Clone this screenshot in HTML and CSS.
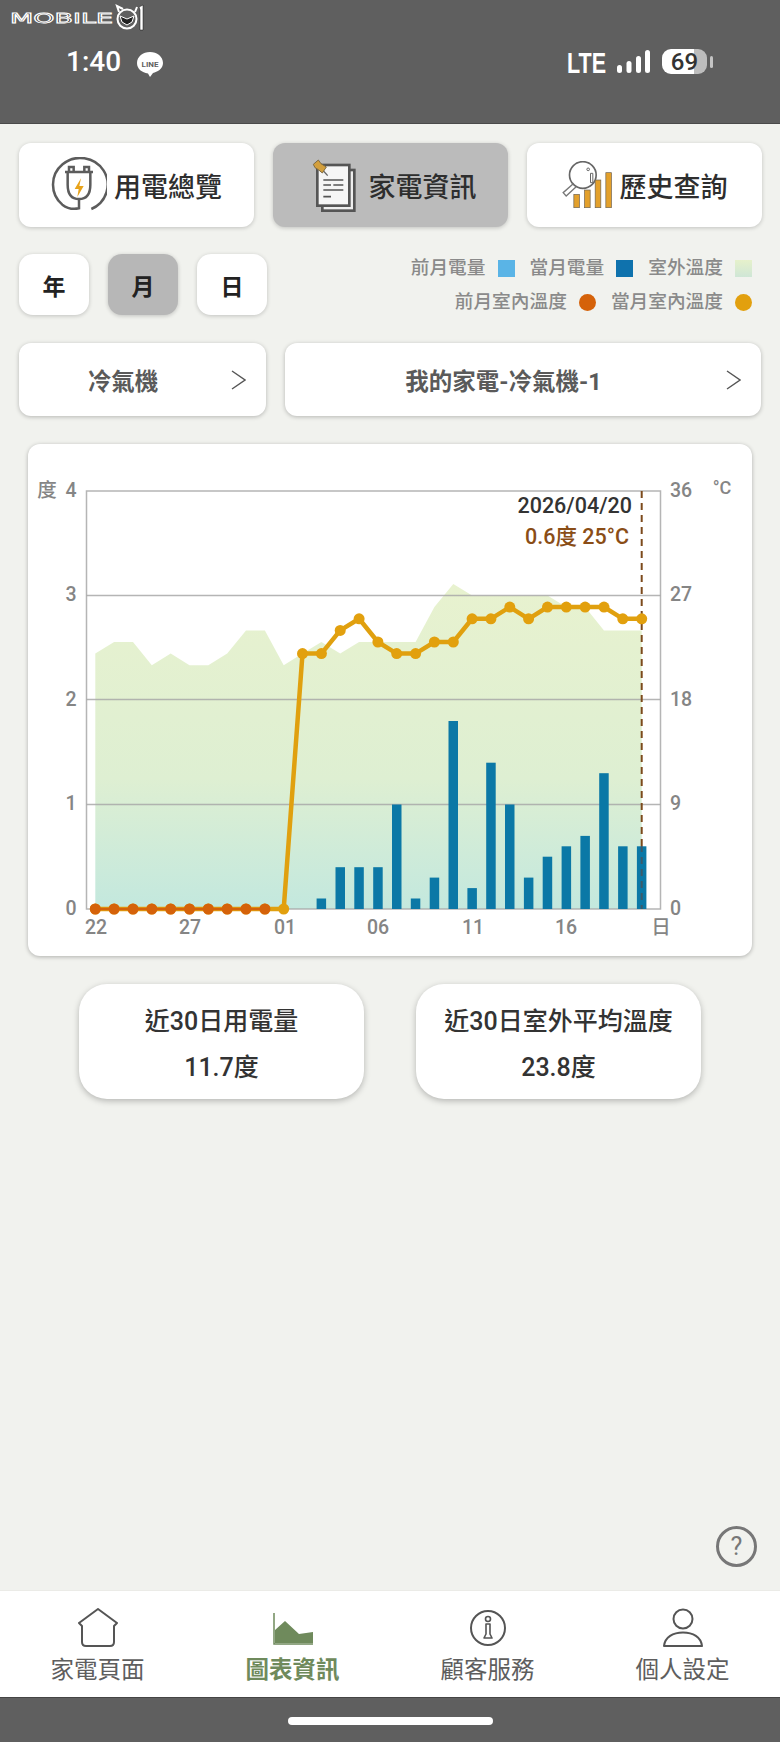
FILE: index.html
```html
<!DOCTYPE html>
<html lang="zh-Hant">
<head>
<meta charset="utf-8">
<title>圖表資訊</title>
<link rel="stylesheet" href="styles.css">
</head>
<body>
<div class="page">

  <!-- watermark over the status bar -->
  <svg class="logo" viewBox="0 0 136 27" width="136" height="27">
    <text class="logo-text" x="1" y="19" textLength="103" lengthAdjust="spacingAndGlyphs">MOBILE</text>
    <circle class="logo-ring" cx="118" cy="15" r="9.500"/>
    <path class="logo-ring" d="M110 8 L108 2 L114 5 M126 8 L128 3"/>
    <path class="logo-face" d="M111 12 L118 15 L125 12 L123 18 L118 21 L113 18 Z"/>
    <path class="logo-one" d="M130 3 L134 1 V26 H131 V6 Z"/>
  </svg>

  <div class="statusbar">
    <span class="time">1:40</span>
    <svg class="line-icon" viewBox="0 0 28 28" width="28" height="28">
      <path class="white" d="M14 2 C21 2 27 6.500 27 13 C27 19 21 22 17 23 L14 27 L12 23.500 C6 22.500 1 19 1 13 C1 6.500 7 2 14 2 Z"/>
      <text class="line-text" x="14" y="16.500" text-anchor="middle">LINE</text>
    </svg>
    <span class="spacer"></span>
    <svg class="lte" viewBox="0 0 40 26" width="40" height="26">
      <text class="lte-text" x="0" y="24" textLength="39" lengthAdjust="spacingAndGlyphs">LTE</text>
    </svg>
    <svg class="signal" viewBox="0 0 33 26" width="33" height="26">
      <rect class="white" x="0" y="16" width="5" height="8" rx="2.500"/>
      <rect class="white" x="9.500" y="12" width="5" height="12" rx="2.500"/>
      <rect class="white" x="19" y="7" width="5" height="17" rx="2.500"/>
      <rect class="white" x="28" y="1" width="5" height="23" rx="2.500"/>
    </svg>
    <div class="battery"><span>69</span></div>
    <span class="battery-nub"></span>
  </div>

  <main class="main">

    <div class="tabs">
      <div class="tab">
        <svg class="tab-icon plug" viewBox="66 52 168 168" width="56" height="56">
          <path class="ic" d="M187 208 A82 80 0 1 0 100 195 Q122 212 150 206 V180"/>
          <path class="ic" d="M120 95 V82 H134 V95 M166 95 V82 H180 V95 M108 97 H192 M116 97 V135 Q116 178 150 178 Q184 178 184 135 V97"/>
          <path class="bolt" d="M156 116 L137 148 H149 L145 172 L164 139 H151 Z"/>
        </svg>
        <span>用電總覽</span>
      </div>
      <div class="tab on">
        <svg class="tab-icon doc" viewBox="0 0 180 180" width="60" height="60">
          <rect class="doc-back" x="52" y="45" width="96" height="122"/>
          <rect class="doc-front" x="37" y="30" width="96" height="122"/>
          <path class="doc-lines" d="M55 75 H115 M55 90 H78 M85 90 H115 M55 105 H115 M55 125 H78"/>
          <path class="pin-leg" d="M50 42 L68 62"/>
          <path class="pin" d="M25 28 L40 15 L48 26 L64 36 L52 54 L40 44 L30 38 Z"/>
        </svg>
        <span>家電資訊</span>
      </div>
      <div class="tab">
        <svg class="tab-icon mag" viewBox="98 63 152 144" width="51" height="48">
          <circle class="lens" cx="160" cy="105" r="40"/>
          <path class="lens-h" d="M133 130 L101 158 L110 168 L140 140"/>
          <rect class="bar-ic" x="133" y="163" width="17" height="40"/>
          <rect class="bar-ic" x="165" y="150" width="17" height="53"/>
          <rect class="bar-ic" x="197" y="120" width="17" height="83"/>
          <rect class="bar-ic" x="229" y="98" width="17" height="105"/>
          <circle class="lens-i" cx="176" cy="88" r="4"/>
          <path class="lens-i" d="M183 100 V128 L190 128 V100 Z"/>
        </svg>
        <span>歷史查詢</span>
      </div>
    </div>

    <div class="filter-row">
      <div class="periods">
        <div class="period">年</div>
        <div class="period on">月</div>
        <div class="period">日</div>
      </div>
      <div class="legend">
        <div class="legend-row">
          <span>前月電量</span><i class="sw sw-prev"></i>
          <span>當月電量</span><i class="sw sw-cur"></i>
          <span>室外溫度</span><i class="sw sw-out"></i>
        </div>
        <div class="legend-row">
          <span>前月室內溫度</span><i class="sw dot dot-prev"></i>
          <span>當月室內溫度</span><i class="sw dot dot-cur"></i>
        </div>
      </div>
    </div>

    <div class="selects">
      <div class="select">
        <span class="select-text">冷氣機</span>
        <svg class="chev" viewBox="0 0 15 20" width="15" height="20"><path d="M1 1 L14 10 L1 19"/></svg>
      </div>
      <div class="select">
        <span class="select-text">我的家電-冷氣機-1</span>
        <svg class="chev" viewBox="0 0 15 20" width="15" height="20"><path d="M1 1 L14 10 L1 19"/></svg>
      </div>
    </div>

    <div class="chart-card">
      <!-- viewBox is in page pixels so the numbers read straight off the screenshot -->
      <svg class="chart" viewBox="28 444 724 512" width="724" height="512">
        <defs>
          <linearGradient id="areaFill" x1="0" y1="0" x2="0" y2="1">
            <stop offset="0" stop-color="#e8f2cf"/>
            <stop offset="0.6" stop-color="#deefd2"/>
            <stop offset="1" stop-color="#c3e8de"/>
          </linearGradient>
          <marker id="dotY" markerUnits="userSpaceOnUse" markerWidth="12" markerHeight="12" refX="6" refY="6">
            <circle cx="6" cy="6" r="5.500" fill="#e2a00e"/>
          </marker>
          <marker id="dotO" markerUnits="userSpaceOnUse" markerWidth="12" markerHeight="12" refX="6" refY="6">
            <circle cx="6" cy="6" r="5.500" fill="#d5620a"/>
          </marker>
        </defs>

        <polygon fill="url(#areaFill)" points="95.300,909 95.300,653.600 114.100,642 133,642 151.800,665.200 170.700,653.600 189.500,665.200 208.300,665.200 227.200,653.600 246,630.400 264.900,630.400 283.700,665.200 302.500,653.600 321.400,642 340.200,653.600 359.100,642 377.900,642 396.700,642 415.600,642 434.400,607.100 453.300,583.900 472.100,595.500 490.900,595.500 509.800,595.500 528.600,595.500 547.500,595.500 566.300,607.100 585.100,607.100 604,630.400 622.800,630.400 641.700,630.400 641.700,909"/>

        <g class="grid">
          <path d="M86.500 491 H660.500 V909 H86.500 Z"/>
          <path d="M86.500 595.500 H660.500 M86.500 699.500 H660.500 M86.500 804.500 H660.500"/>
        </g>

        <path class="hover-line" d="M641.700 491 V909"/>

        <g class="bars">
          <rect x="316.600" y="898.500" width="9.500" height="10.500"/>
          <rect x="335.500" y="867.200" width="9.500" height="41.800"/>
          <rect x="354.300" y="867.200" width="9.500" height="41.800"/>
          <rect x="373.200" y="867.200" width="9.500" height="41.800"/>
          <rect x="392" y="804.500" width="9.500" height="104.500"/>
          <rect x="410.800" y="898.500" width="9.500" height="10.500"/>
          <rect x="429.700" y="877.600" width="9.500" height="31.400"/>
          <rect x="448.500" y="721" width="9.500" height="188"/>
          <rect x="467.400" y="888.100" width="9.500" height="20.900"/>
          <rect x="486.200" y="762.700" width="9.500" height="146.300"/>
          <rect x="505" y="804.500" width="9.500" height="104.500"/>
          <rect x="523.900" y="877.600" width="9.500" height="31.400"/>
          <rect x="542.700" y="856.700" width="9.500" height="52.300"/>
          <rect x="561.600" y="846.300" width="9.500" height="62.700"/>
          <rect x="580.400" y="835.900" width="9.500" height="73.100"/>
          <rect x="599.200" y="773.200" width="9.500" height="135.800"/>
          <rect x="618.100" y="846.300" width="9.500" height="62.700"/>
          <rect x="636.900" y="846.300" width="9.500" height="62.700"/>
        </g>
        <path class="hover-line over" d="M641.700 846 V909"/>

        <polyline class="line-cur" marker-start="url(#dotY)" marker-mid="url(#dotY)" marker-end="url(#dotY)" points="95.300,909 114.100,909 133,909 151.800,909 170.700,909 189.500,909 208.300,909 227.200,909 246,909 264.900,909 283.700,909 302.500,653.600 321.400,653.600 340.200,630.400 359.100,618.800 377.900,642 396.700,653.600 415.600,653.600 434.400,642 453.300,642 472.100,618.800 490.900,618.800 509.800,607.100 528.600,618.800 547.500,607.100 566.300,607.100 585.100,607.100 604,607.100 622.800,618.800 641.700,618.800"/>
        <polyline class="line-prev" marker-start="url(#dotO)" marker-mid="url(#dotO)" marker-end="url(#dotO)" points="95.300,909 114.100,909 133,909 151.800,909 170.700,909 189.500,909 208.300,909 227.200,909 246,909 264.900,909"/>

        <g class="axis">
          <text x="47" y="497" text-anchor="middle">度</text>
          <text x="71" y="497" text-anchor="middle">4</text>
          <text x="71" y="601" text-anchor="middle">3</text>
          <text x="71" y="706" text-anchor="middle">2</text>
          <text x="71" y="810" text-anchor="middle">1</text>
          <text x="71" y="915" text-anchor="middle">0</text>
          <text x="670" y="497">36</text>
          <text x="670" y="601">27</text>
          <text x="670" y="706">18</text>
          <text x="670" y="810">9</text>
          <text x="670" y="915">0</text>
          <text class="unit" x="722" y="494" text-anchor="middle">°C</text>
          <text x="96" y="934" text-anchor="middle">22</text>
          <text x="190" y="934" text-anchor="middle">27</text>
          <text x="285" y="934" text-anchor="middle">01</text>
          <text x="378" y="934" text-anchor="middle">06</text>
          <text x="473" y="934" text-anchor="middle">11</text>
          <text x="566" y="934" text-anchor="middle">16</text>
          <text x="661" y="934" text-anchor="middle">日</text>
        </g>

        <text class="tip-date" x="632" y="513" text-anchor="end">2026/04/20</text>
        <text class="tip-val" x="629" y="544" text-anchor="end">0.6度 25°C</text>
      </svg>
    </div>

    <div class="stats">
      <div class="stat">
        <div>近30日用電量</div>
        <div>11.7度</div>
      </div>
      <div class="stat">
        <div>近30日室外平均溫度</div>
        <div>23.8度</div>
      </div>
    </div>

    <div class="help">?</div>
  </main>

  <nav class="nav">
    <div class="nav-item">
      <svg viewBox="0 0 42 40" width="42" height="40"><path class="nav-ic" d="M21 1 L40 15 L37 18 V34 Q37 38 33 38 H9 Q5 38 5 34 V18 L2 15 Z"/></svg>
      <span>家電頁面</span>
    </div>
    <div class="nav-item on">
      <svg viewBox="0 0 42 40" width="42" height="40">
        <path class="nav-axis" d="M2 5 V36 H41"/>
        <path class="nav-area" d="M3 35 V22 L13 13 L27 26 L41 24 V35 Z"/>
      </svg>
      <span>圖表資訊</span>
    </div>
    <div class="nav-item">
      <svg viewBox="0 0 42 40" width="42" height="40">
        <circle class="nav-ic" cx="21" cy="20" r="17"/>
        <circle class="nav-ic thin" cx="21" cy="11" r="2.500"/>
        <path class="nav-ic thin" d="M19 16 H23 V26 L25 30 H17 L19 26 Z"/>
      </svg>
      <span>顧客服務</span>
    </div>
    <div class="nav-item">
      <svg viewBox="0 0 42 40" width="42" height="40">
        <circle class="nav-ic" cx="21" cy="11" r="9.500"/>
        <path class="nav-ic" d="M2 38 C3 29 11 24.500 21 24.500 C31 24.500 39 29 40 38 Z"/>
      </svg>
      <span>個人設定</span>
    </div>
  </nav>

  <div class="homebar"><span class="home-pill"></span></div>
</div>
</body>
</html>
```
FILE: styles.css
```css
* {
  box-sizing: border-box;
}

html, body {
  margin: 0;
  padding: 0;
}

body {
  font-family: Roboto, "Noto Sans CJK TC", sans-serif;
  background-color: #f1f2ee;
}

.page {
  position: relative;
  display: flex;
  flex-direction: column;
  width: 780px;
  height: 1742px;
  overflow: hidden;
}

.white {
  fill: #fff;
}

/* Watermark */
.logo {
  position: absolute;
  left: 9px;
  top: 4px;
}

.logo-text {
  font-family: "DejaVu Sans", sans-serif;
  font-size: 14px;
  fill: #333;
  stroke: #fff;
  stroke-width: 0.8;
}

.logo-ring {
  fill: #5f5f5f;
  stroke: #fff;
  stroke-width: 2;
}

.logo-face {
  fill: #222;
  stroke: #fff;
  stroke-width: 1;
}

.logo-one {
  fill: #fff;
  stroke: #111;
  stroke-width: 0.5;
}

/* Status bar */
.statusbar {
  display: flex;
  align-items: center;
  height: 124px;
  padding: 0 67px 0 66px;
  background-color: #5f5f5f;
  border-bottom: 1px solid #4a4a4a;
  color: #fff;
}

.time {
  font-size: 28px;
  font-weight: 500;
  margin-right: 15px;
}

.line-icon {
  margin-top: 4px;
}

.line-text {
  font-family: Roboto, sans-serif;
  font-size: 8px;
  font-weight: 700;
  fill: #5f5f5f;
}

.spacer {
  flex: 1;
}

.lte {
  overflow: visible;
}

.lte-text {
  font-family: "Liberation Sans", sans-serif;
  font-size: 30px;
  font-weight: 700;
  fill: #fff;
}

.signal {
  margin-left: 10px;
  margin-right: 12px;
}

.battery {
  display: flex;
  align-items: center;
  justify-content: center;
  width: 45px;
  height: 25px;
  border-radius: 9px;
  background: linear-gradient(to right, #fff 72%, #bdbdbd 72%);
  color: #333;
  font-size: 24px;
  font-weight: 500;
}

.battery-nub {
  width: 3px;
  height: 12px;
  margin-left: 3px;
  border-radius: 2px;
  background-color: #c4c4c4;
}

/* Main */
.main {
  flex: 1;
  display: flex;
  flex-direction: column;
  padding: 19px 19px 23px;
}

.tabs {
  display: grid;
  grid-template-columns: repeat(3, 235px);
  column-gap: 19px;
}

.tab {
  display: flex;
  align-items: center;
  justify-content: center;
  gap: 7px;
  height: 84px;
  border-radius: 12px;
  background-color: #fff;
  box-shadow: 0 1px 4px rgba(0, 0, 0, 0.2);
  color: #2e2e2e;
  font-size: 27px;
  font-weight: 500;
}

.tab.on {
  gap: 4px;
  background-color: #bbbbbb;
}

.ic {
  fill: none;
  stroke: #5c5c5c;
  stroke-width: 7.500;
}

.bolt {
  fill: #e8a31a;
}

.doc-back {
  fill: #eeeeee;
  stroke: #555;
  stroke-width: 8;
}

.doc-front {
  fill: #f6f6f6;
  stroke: #555;
  stroke-width: 8;
}

.doc-lines {
  fill: none;
  stroke: #555;
  stroke-width: 5;
}

.pin {
  fill: #d39f3c;
  stroke: #7d6a44;
  stroke-width: 3;
}

.pin-leg {
  stroke: #666;
  stroke-width: 4;
}

.lens {
  fill: #fff;
  stroke: #666;
  stroke-width: 5;
}

.lens-h {
  fill: none;
  stroke: #777;
  stroke-width: 4;
}

.lens-i {
  fill: none;
  stroke: #666;
  stroke-width: 3;
}

.bar-ic {
  fill: #e3a02b;
  stroke: #6b6255;
  stroke-width: 2;
}

/* Period buttons and legend */
.filter-row {
  display: flex;
  justify-content: space-between;
  margin-top: 27px;
  height: 61px;
}

.periods {
  display: flex;
  gap: 19px;
}

.period {
  display: flex;
  align-items: center;
  justify-content: center;
  width: 70px;
  height: 61px;
  border-radius: 14px;
  background-color: #fff;
  box-shadow: 0 1px 4px rgba(0, 0, 0, 0.2);
  color: #222;
  font-size: 23px;
  font-weight: 700;
}

.period.on {
  background-color: #b7b7b7;
}

.legend {
  display: flex;
  flex-direction: column;
  align-items: flex-end;
  gap: 14px;
  padding-right: 9px;
  padding-top: 4px;
  color: #8a8a8a;
  font-size: 18.700px;
  font-weight: 500;
  line-height: 20px;
}

.legend-row {
  display: flex;
  align-items: center;
  height: 20px;
}

.sw {
  display: block;
  width: 17px;
  height: 17px;
  margin-left: 12px;
  margin-right: 15px;
}

.sw:last-child {
  margin-right: 0;
}

.sw-prev {
  background-color: #5ab4e6;
}

.sw-cur {
  background-color: #0f72ad;
}

.sw-out {
  background: linear-gradient(#e6f1cb, #cfe6d6);
}

.dot {
  border-radius: 50%;
}

.dot-prev {
  background-color: #d5620a;
}

.dot-cur {
  background-color: #e2a00e;
}

/* Selects */
.selects {
  display: grid;
  grid-template-columns: 247px 476px;
  column-gap: 19px;
  margin-top: 28px;
}

.select {
  display: flex;
  align-items: center;
  height: 73px;
  padding-right: 20px;
  border-radius: 12px;
  background-color: #fff;
  box-shadow: 0 1px 4px rgba(0, 0, 0, 0.25);
  color: #5a5a5a;
  font-size: 23.500px;
  font-weight: 700;
}

.select-text {
  flex: 1;
  text-align: center;
  padding-right: 4px;
}

.chev path {
  fill: none;
  stroke: #555;
  stroke-width: 1.400;
}

/* Chart */
.chart-card {
  width: 724px;
  height: 512px;
  margin: 28px 0 0 9px;
  border-radius: 12px;
  background-color: #fff;
  box-shadow: 0 1px 4px rgba(0, 0, 0, 0.28);
}

.chart {
  display: block;
}

.grid path {
  fill: none;
  stroke: #a8a8a8;
  stroke-opacity: 0.85;
  stroke-width: 1.500;
}

.hover-line {
  stroke: #7c4a1c;
  stroke-width: 2;
  stroke-dasharray: 7 5;
}

.hover-line.over {
  stroke: #3d5a6a;
  stroke-dashoffset: 1;
}

.bars rect {
  fill: #0b78a6;
}

.line-cur {
  fill: none;
  stroke: #e0a00f;
  stroke-width: 4.500;
}

.line-prev {
  fill: none;
  stroke: #d5620a;
  stroke-width: 2.500;
}

.axis text {
  fill: #858585;
  font-size: 19.500px;
  font-weight: 500;
}

.axis .unit {
  font-size: 18px;
}

.tip-date {
  fill: #333;
  font-size: 21.500px;
  font-weight: 500;
}

.tip-val {
  fill: #8a4d16;
  font-size: 21.500px;
  font-weight: 500;
}

/* Summary cards */
.stats {
  display: flex;
  justify-content: center;
  gap: 52px;
  margin-top: 28px;
}

.stat {
  display: flex;
  flex-direction: column;
  align-items: center;
  gap: 13px;
  width: 285px;
  height: 115px;
  padding-top: 21px;
  border-radius: 28px;
  background-color: #fff;
  box-shadow: 0 2px 6px rgba(0, 0, 0, 0.25);
  color: #333;
  font-size: 25px;
  font-weight: 500;
  line-height: 33px;
}

.help {
  display: flex;
  align-items: center;
  justify-content: center;
  align-self: flex-end;
  width: 41px;
  height: 41px;
  margin-top: auto;
  margin-right: 4px;
  border: 3px solid #777;
  border-radius: 50%;
  color: #777;
  font-size: 25px;
}

/* Bottom nav */
.nav {
  display: grid;
  grid-template-columns: repeat(4, 195px);
  height: 107px;
  background-color: #fff;
  border-top: 1px solid #ebebe7;
}

.nav-item {
  display: flex;
  flex-direction: column;
  align-items: center;
  padding-top: 17px;
  color: #5e5e5e;
  font-size: 23.500px;
  line-height: 32px;
}

.nav-item span {
  margin-top: 6px;
}

.nav-item.on {
  color: #6f8a5c;
  font-weight: 700;
}

.nav-ic {
  fill: none;
  stroke: #555;
  stroke-width: 2;
  stroke-linejoin: round;
}

.nav-ic.thin {
  stroke-width: 1.600;
}

.nav-axis {
  fill: none;
  stroke: #6f8a5c;
  stroke-width: 1.500;
}

.nav-area {
  fill: #6f8a5c;
}

.homebar {
  display: flex;
  align-items: flex-start;
  justify-content: center;
  height: 45px;
  padding-top: 19px;
  background-color: #5f5f5f;
  border-top: 1px solid #444;
}

.home-pill {
  width: 205px;
  height: 8px;
  border-radius: 4px;
  background-color: #fff;
}
```
